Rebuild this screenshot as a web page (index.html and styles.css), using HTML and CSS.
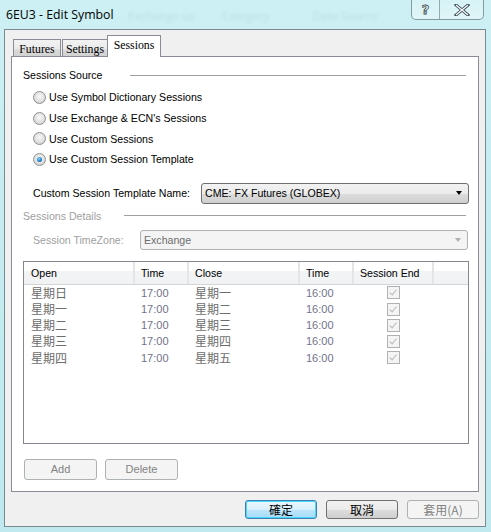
FILE: index.html
```html
<!DOCTYPE html>
<html>
<head>
<meta charset="utf-8">
<link rel="stylesheet" href="styles.css">
</head>
<body>
<div class="window">
  <div class="titlebar">
    <div class="title">6EU3 - Edit Symbol</div>
    <div class="ghost">
      <span class="g1">Exchange us</span>
      <span class="g2">Category</span>
      <span class="g3">Data Source</span>
    </div>
    <div class="controls">
      <div class="cbtn help">?</div>
      <div class="cbtn close"><svg width="16" height="12" viewBox="0 0 16 12"><path d="M2 1 L14 11 M14 1 L2 11" stroke="#3c4a52" stroke-width="3" stroke-linecap="square"/><path d="M2 1 L14 11 M14 1 L2 11" stroke="#f4f8f9" stroke-width="1.4"/></svg></div>
    </div>
  </div>
  <div class="client">
    <div class="tabs">
      <div class="tab">Futures</div>
      <div class="tab">Settings</div>
      <div class="tab active">Sessions</div>
    </div>
    <div class="panel">
      <div class="group-head first"><span class="glabel">Sessions Source</span><span class="gline l1"></span></div>
      <div class="radios">
        <div class="radio-row"><span class="radio"></span>Use Symbol Dictionary Sessions</div>
        <div class="radio-row"><span class="radio"></span>Use Exchange &amp; ECN's Sessions</div>
        <div class="radio-row"><span class="radio"></span>Use Custom Sessions</div>
        <div class="radio-row"><span class="radio checked"></span>Use Custom Session Template</div>
      </div>
      <div class="field-row template">
        <span class="flabel">Custom Session Template Name:</span>
        <div class="combo"><span>CME: FX Futures (GLOBEX)</span><span class="arrow"></span></div>
      </div>
      <div class="group-head second disabled"><span class="glabel">Sessions Details</span><span class="gline l2"></span></div>
      <div class="field-row tz disabled">
        <span class="flabel">Session TimeZone:</span>
        <div class="combo off"><span>Exchange</span><span class="arrow"></span></div>
      </div>
      <div class="table">
        <div class="thead">
          <div class="th">Open</div>
          <div class="th">Time</div>
          <div class="th">Close</div>
          <div class="th">Time</div>
          <div class="th">Session End</div>
          <div class="th last"></div>
        </div>
        <div class="tr"><div class="td">星期日</div><div class="td t">17:00</div><div class="td">星期一</div><div class="td t">16:00</div><div class="td c"><span class="chk"></span></div></div>
        <div class="tr"><div class="td">星期一</div><div class="td t">17:00</div><div class="td">星期二</div><div class="td t">16:00</div><div class="td c"><span class="chk"></span></div></div>
        <div class="tr"><div class="td">星期二</div><div class="td t">17:00</div><div class="td">星期三</div><div class="td t">16:00</div><div class="td c"><span class="chk"></span></div></div>
        <div class="tr"><div class="td">星期三</div><div class="td t">17:00</div><div class="td">星期四</div><div class="td t">16:00</div><div class="td c"><span class="chk"></span></div></div>
        <div class="tr"><div class="td">星期四</div><div class="td t">17:00</div><div class="td">星期五</div><div class="td t">16:00</div><div class="td c"><span class="chk"></span></div></div>
      </div>
      <div class="row-btns">
        <div class="btn off">Add</div>
        <div class="btn off">Delete</div>
      </div>
    </div>
    <div class="footer">
      <div class="btn dlg default">確定</div>
      <div class="btn dlg">取消</div>
      <div class="btn dlg off">套用(A)</div>
    </div>
  </div>
</div>
</body>
</html>
```
FILE: styles.css
```css
html, body {
  margin: 0;
  padding: 0;
}
body {
  width: 491px;
  height: 532px;
  overflow: hidden;
  font-family: "Liberation Sans", Arial, "Noto Sans CJK TC", sans-serif;
  font-size: 10.6px;
  color: #000;
}
.window {
  height: 532px;
  display: flex;
  flex-direction: column;
  background: linear-gradient(180deg, #cdf0f4 0%, #c4ecf1 40%, #bfe9ef 100%);
}
.titlebar {
  height: 29px;
  display: flex;
  align-items: flex-start;
  position: relative;
}
.title {
  margin: 6px 0 0 6px;
  font-family: "Open Sans", "Noto Sans", sans-serif;
  font-size: 12.3px;
  color: #000;
  white-space: nowrap;
}
.ghost {
  position: absolute;
  top: 8px;
  left: 128px;
  font-family: "Open Sans", sans-serif;
  font-size: 11.5px;
  color: rgba(40, 80, 100, 0.11);
  filter: blur(1.4px);
  white-space: nowrap;
}
.ghost .g1 { margin-right: 24px; }
.ghost .g2 { margin-right: 40px; }
.controls {
  margin-left: auto;
  margin-right: 7px;
  display: flex;
  height: 19px;
  border: 1px solid rgba(60, 80, 90, 0.55);
  border-top: none;
  border-radius: 0 0 5px 5px;
  background: linear-gradient(180deg, rgba(255,255,255,0.2), rgba(255,255,255,0.4));
  overflow: hidden;
}
.cbtn {
  display: flex;
  align-items: center;
  justify-content: center;
  height: 19px;
}
.help {
  width: 27px;
  border-right: 1px solid rgba(60, 80, 90, 0.45);
  font-family: "DejaVu Sans", sans-serif;
  font-weight: bold;
  font-size: 13px;
  color: #f4f8f9;
  -webkit-text-stroke: 0.8px #3c4a52;
}
.close {
  width: 43px;
}
.client {
  flex: 1;
  margin: 0 5px 5px 4px;
  border: 1px solid #7a8a92;
  background: #f0f0f0;
  padding: 6px 6px 7px 6px;
  display: flex;
  flex-direction: column;
}
.tabs {
  display: flex;
  align-items: flex-end;
  height: 21px;
  padding-left: 2px;
  margin-bottom: -1px;
}
.tab {
  box-sizing: border-box;
  height: 18px;
  border: 1px solid #898c95;
  border-bottom: none;
  background: linear-gradient(180deg, #f2f2f2 0%, #ebebeb 50%, #dddddd 51%, #cfcfcf 100%);
  font-family: "Liberation Serif", "Times New Roman", serif;
  font-size: 11.8px;
  line-height: 18px;
  text-align: center;
}
.tab:nth-child(1) { width: 48px; margin-right: 1px; }
.tab:nth-child(2) { width: 46px; }
.tab.active {
  height: 22px;
  width: 54px;
  margin-left: -1px;
  background: #fff;
  line-height: 18px;
  position: relative;
  z-index: 2;
}
.panel {
  height: 434px;
  border: 1px solid #898c95;
  background: #fff;
  padding: 0 9px 0 11px;
  display: flex;
  flex-direction: column;
}
.group-head {
  display: flex;
  align-items: center;
  height: 14px;
}
.group-head.first { margin-top: 11px; }
.group-head.second { margin-top: 5px; }
.glabel {
  white-space: nowrap;
}
.gline {
  flex: 1;
  height: 1px;
  background: #a0a0a0;
  margin-right: 3px;
}
.gline.l1 { margin-left: 27px; }
.gline.l2 { margin-left: 23px; }
.disabled { color: #a0a0a0; }
.radios {
  margin-top: 5px;
  padding-left: 10px;
  display: flex;
  flex-direction: column;
}
.radio-row {
  height: 20.7px;
  display: flex;
  align-items: center;
  white-space: nowrap;
}
.radio {
  width: 11px;
  height: 11px;
  border-radius: 50%;
  border: 1px solid #8e8f8f;
  background: radial-gradient(circle at 50% 40%, #f8f8f8 0%, #e0e0e0 55%, #c8c8c8 100%);
  margin-right: 3px;
  box-sizing: content-box;
  display: flex;
  align-items: center;
  justify-content: center;
}
.radio.checked::after {
  content: "";
  width: 5px;
  height: 5px;
  border-radius: 50%;
  background: radial-gradient(circle at 40% 35%, #8ad3f5 0%, #2a8ad4 50%, #0d4f8b 100%);
}
.field-row {
  display: flex;
  align-items: center;
  padding-left: 10px;
  white-space: nowrap;
}
.field-row.template {
  margin-top: 13px;
  height: 21px;
}
.field-row.template .flabel { width: 168px; }
.field-row.tz {
  margin-top: 7px;
  height: 20px;
}
.field-row.tz .flabel { width: 107px; }
.combo {
  flex: 1;
  height: 19px;
  border: 1px solid #707070;
  border-radius: 3px;
  background: linear-gradient(180deg, #f2f2f2 0%, #ebebeb 50%, #dddddd 51%, #cfcfcf 100%);
  display: flex;
  align-items: center;
  padding-left: 3px;
  color: #000;
}
.combo span:first-child { flex: 1; }
.arrow {
  width: 0;
  height: 0;
  border-left: 3.5px solid transparent;
  border-right: 3.5px solid transparent;
  border-top: 4px solid #000;
  margin-right: 6px;
}
.combo.off {
  border-color: #adb2b5;
  background: #f4f4f4;
  color: #6d6d6d;
  height: 18px;
  margin-right: 1px;
}
.combo.off .arrow { border-top-color: #adb2b5; }
.table {
  margin-top: 11px;
  height: 181px;
  border: 1px solid #828790;
  background: #fff;
}
.thead {
  display: grid;
  grid-template-columns: 111px 54px 111px 54px 80px 1fr;
  height: 22px;
  border-bottom: 1px solid #d5d5d5;
  background: linear-gradient(180deg, #ffffff 0%, #ffffff 40%, #f3f4f6 41%, #f1f2f4 100%);
}
.th {
  border-right: 2px solid #e4e5e7;
  padding-left: 6px;
  line-height: 22px;
  white-space: nowrap;
}
.th:first-child { padding-left: 7px; }
.th.last { border-right: none; }
.tr {
  display: grid;
  grid-template-columns: 111px 54px 111px 54px 80px;
  height: 16.2px;
}
.td {
  padding-left: 6px;
  line-height: 16px;
  color: #6d6d6d;
  font-family: "Noto Sans CJK TC", sans-serif;
  font-size: 12px;
}
.td:first-child { padding-left: 7px; }
.td.t {
  font-family: "Liberation Sans", sans-serif;
  font-size: 11px;
  color: #72728c;
}
.td.c {
  display: flex;
  align-items: center;
  justify-content: center;
  padding-left: 0;
}
.chk {
  width: 11px;
  height: 11px;
  border: 1px solid #b1b1b1;
  background: #f4f4f4;
  margin-left: -1px;
  position: relative;
}
.chk::after {
  content: "";
  position: absolute;
  left: 3px;
  top: 1px;
  width: 3px;
  height: 6px;
  border-right: 1.5px solid #b8b8b8;
  border-bottom: 1.5px solid #b8b8b8;
  transform: rotate(40deg);
}
.row-btns {
  display: flex;
  gap: 8px;
  margin-top: 15px;
  padding-left: 1px;
}
.btn {
  width: 71px;
  height: 19px;
  border: 1px solid #707070;
  border-radius: 3px;
  background: linear-gradient(180deg, #f2f2f2 0%, #ebebeb 50%, #dddddd 51%, #cfcfcf 100%);
  display: flex;
  align-items: center;
  justify-content: center;
  white-space: nowrap;
  font-size: 11px;
}
.btn.off {
  border-color: #adb2b5;
  background: #f4f4f4;
  color: #838383;
}
.footer {
  display: flex;
  justify-content: flex-end;
  gap: 9px;
  margin-top: 8px;
}
.btn.dlg {
  font-family: "Noto Sans CJK TC", sans-serif;
  font-size: 12px;
  height: 17px;
  width: 70px;
}
.btn.default {
  border-color: #3c7fb1;
  background: linear-gradient(180deg, #eaf6fd 0%, #d9f0fc 50%, #bee6fd 51%, #a7d9f5 100%);
  box-shadow: inset 0 0 0 1px #48d8fb;
}
```
